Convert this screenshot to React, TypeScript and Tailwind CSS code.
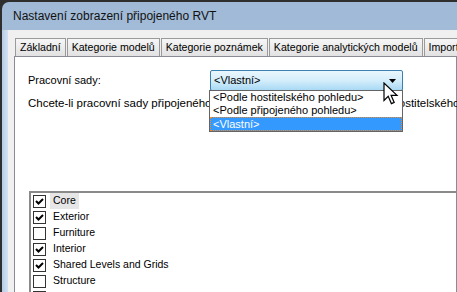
import React from 'react'

const TABS = [
  'Základní',
  'Kategorie modelů',
  'Kategorie poznámek',
  'Kategorie analytických modelů',
  'Importované kategorie',
]

const OPTIONS = ['<Podle hostitelského pohledu>', '<Podle připojeného pohledu>', '<Vlastní>']

const WORKSETS = [
  { name: 'Core', checked: true, focus: true },
  { name: 'Exterior', checked: true },
  { name: 'Furniture', checked: false },
  { name: 'Interior', checked: true },
  { name: 'Shared Levels and Grids', checked: true },
  { name: 'Structure', checked: false },
  { name: 'Workset1', checked: false },
]

function Checkbox({ checked }: { checked: boolean }) {
  return (
    <span className="flex h-[13px] w-[13px] shrink-0 items-center justify-center border border-[#333] bg-white">
      {checked && (
        <svg width="11" height="11" viewBox="0 0 11 11">
          <polyline points="2,5 4.5,7.5 9,3" fill="none" stroke="#000" strokeWidth="2" />
        </svg>
      )}
    </span>
  )
}

function Cursor() {
  return (
    <svg className="absolute left-[383px] top-[82px] z-20" width="16" height="24" viewBox="0 0 16 24">
      <path
        d="M1 1 L1 18.5 L5.2 14.3 L8.4 21.6 L11.2 20.4 L8.1 13.3 L14 13.3 Z"
        fill="#fff"
        stroke="#000"
        strokeWidth="1.2"
      />
    </svg>
  )
}

export default function App() {
  return (
    <div className="relative h-[292px] w-[457px] overflow-hidden bg-[#2e2e2e] pl-[2px] pt-[2px] font-['Liberation_Sans',Arial,sans-serif] text-[11px] text-black">
      <div className="flex h-full flex-col rounded-tl-[7px] bg-gradient-to-b from-[#9fb9d6] to-[#c2d7ee]">
        {/* title bar */}
        <div className="flex h-[28px] shrink-0 items-center pl-[11px] text-[12px] text-[#111]">
          Nastavení zobrazení připojeného RVT
        </div>

        <div className="flex flex-1">
          <div className="w-[6px] shrink-0 bg-gradient-to-r from-[#b4cce6] to-[#d3e2f2]" />
          <div className="flex min-w-0 flex-1 flex-col bg-[#f0f0f0] pl-[6px] pt-[8px]">
            {/* tabs */}
            <div className="flex h-[18px] shrink-0 overflow-hidden whitespace-nowrap pl-[1px] text-[10.6px]">
              {TABS.map((tab) => (
                <div
                  key={tab}
                  className="mr-[1px] flex h-[18px] shrink-0 items-center border border-b-0 border-[#9a9a9a] bg-gradient-to-b from-[#f6f6f6] to-[#e2e2e2] px-[4px] leading-none"
                >
                  {tab}
                </div>
              ))}
            </div>

            {/* panel */}
            <div className="flex flex-1 flex-col border border-[#898c95] bg-white pl-[13px] pt-[13px]">
              <div className="flex h-[21px] items-center whitespace-nowrap">
                <span className="w-[182px] shrink-0">Pracovní sady:</span>
                <div className="relative">
                  <div className="flex h-[21px] w-[193px] items-center justify-between rounded-[2px] border border-[#3c7fb1] bg-gradient-to-b from-[#eaf6fd] via-[#d4eefb] to-[#a9d9f4] pl-[3px] pr-[6px]">
                    <span>&lt;Vlastní&gt;</span>
                    <svg width="7" height="4" viewBox="0 0 7 4">
                      <path d="M0 0 H7 L3.5 4 Z" fill="#000" />
                    </svg>
                  </div>
                  {/* dropdown list */}
                  <div className="absolute left-[-1px] top-[20px] z-10 w-[194px] border border-[#646464] bg-white">
                    {OPTIONS.map((opt, i) => (
                      <div
                        key={opt}
                        className={
                          i === 2
                            ? 'flex h-[14px] items-center border border-dotted border-[#f08a24] bg-[#3399ff] px-[2px] text-white'
                            : 'flex h-[13px] items-center px-[3px]'
                        }
                      >
                        {opt}
                      </div>
                    ))}
                  </div>
                </div>
              </div>

              <p className="mt-[6px] whitespace-nowrap text-[11.5px] leading-[13px]">
                Chcete-li pracovní sady připojeného modelu zobrazovat jako v pohledu hostitelského modelu
              </p>

              {/* worksets list */}
              <div className="ml-[1px] mt-[81px] flex-1 border-l-2 border-t-2 border-l-[#8a8a8a] border-t-[#8a8a8a] bg-white pl-[2px] text-[10.5px]">
                {WORKSETS.map((w) => (
                  <div key={w.name} className="flex h-[16px] items-center whitespace-nowrap">
                    <Checkbox checked={w.checked} />
                    <span
                      className={
                        w.focus
                          ? 'ml-[4px] flex h-[16px] items-center bg-[#e6e6e6] px-[3px]'
                          : 'ml-[4px] flex h-[16px] items-center px-[3px]'
                      }
                    >
                      {w.name}
                    </span>
                  </div>
                ))}
              </div>
            </div>
          </div>
        </div>
      </div>
      <Cursor />
    </div>
  )
}
